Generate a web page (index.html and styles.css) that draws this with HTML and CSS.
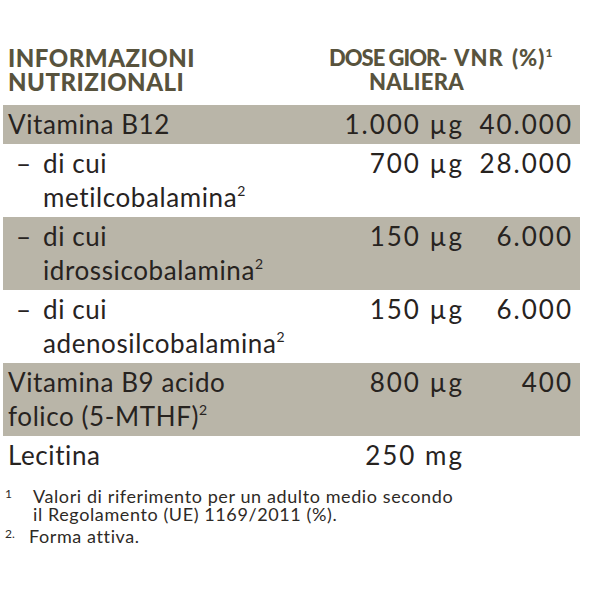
FILE: index.html
```html
<!DOCTYPE html>
<html lang="it">
<head>
<meta charset="utf-8">
<title>Informazioni nutrizionali</title>
<link rel="stylesheet" href="styles.css">
</head>
<body>
<div class="panel">
  <div class="head">
    <div class="h-name">INFORMAZIONI<br>NUTRIZIONALI</div>
    <div class="h-dose"><span class="l1">DOSE GIOR-</span><span class="l2">NALIERA</span></div>
    <div class="h-vnr">VNR (%)<sup>1</sup></div>
  </div>
  <div class="table">
    <div class="row shade">
      <div class="name">Vitamina B12</div>
      <div class="val">1.000 µg</div>
      <div class="vnr">40.000</div>
    </div>
    <div class="row">
      <div class="name sub"><span class="dash">–</span><span>di cui<br>metilcobalamina<sup>2</sup></span></div>
      <div class="val">700 µg</div>
      <div class="vnr">28.000</div>
    </div>
    <div class="row shade">
      <div class="name sub"><span class="dash">–</span><span>di cui<br>idrossicobalamina<sup>2</sup></span></div>
      <div class="val">150 µg</div>
      <div class="vnr">6.000</div>
    </div>
    <div class="row">
      <div class="name sub"><span class="dash">–</span><span>di cui<br>adenosilcobalamina<sup>2</sup></span></div>
      <div class="val">150 µg</div>
      <div class="vnr">6.000</div>
    </div>
    <div class="row shade">
      <div class="name">Vitamina B9 acido<br>folico (5-MTHF)<sup>2</sup></div>
      <div class="val">800 µg</div>
      <div class="vnr">400</div>
    </div>
    <div class="row">
      <div class="name">Lecitina</div>
      <div class="val">250 mg</div>
      <div class="vnr"></div>
    </div>
  </div>
  <div class="notes">
    <div class="note"><span class="mark">1</span><span>Valori di riferimento per un adulto medio secondo<br>il Regolamento (UE) 1169/2011 (%).</span></div>
    <div class="note note2"><span class="mark">2.</span><span>Forma attiva.</span></div>
  </div>
</div>
</body>
</html>
```

FILE: styles.css
```css
* { box-sizing: border-box; }
html, body { margin: 0; padding: 0; background: #ffffff; }
body { font-family: "Lato", "DejaVu Sans", sans-serif; color: #27231f; }

.panel {
  width: 580px;
  padding: 46px 0 0 3px;
}

.head {
  display: flex;
  font-weight: 900;
  font-size: 24px;
  line-height: 24px;
  color: #58533d;
  white-space: nowrap;
}
.h-name { padding-left: 5px; width: 326px; flex: none; letter-spacing: 0.5px; }
.h-dose { display: flex; flex-direction: column; width: 125px; flex: none; font-size: 22px; }
.h-dose .l1 { letter-spacing: -1px; }
.h-dose .l2 { padding-left: 40px; letter-spacing: 0.3px; }
.h-vnr { font-size: 22px; letter-spacing: 1px; word-spacing: 2px; }
.h-vnr sup { font-size: 12px; vertical-align: top; line-height: 14px; letter-spacing: 0; }

.table { margin-top: 11px; }
.row {
  display: grid;
  grid-template-columns: 1fr 132px 118px;
  font-size: 26px;
  line-height: 34px;
  padding: 2px 0 3px;
}
.row.shade { background: #b9b5a8; }
.name { padding-left: 5px; white-space: nowrap; letter-spacing: 0.6px; }
.name.sub { display: flex; padding-left: 13px; }
.dash { width: 27px; flex: none; }
.val { text-align: right; white-space: nowrap; letter-spacing: 2px; margin-right: -2px; }
.vnr { text-align: right; padding-right: 7px; white-space: nowrap; letter-spacing: 2px; }
.row sup { font-size: 14px; line-height: 0; vertical-align: 11px; letter-spacing: 0; }

.notes {
  margin-top: 12px;
  font-size: 18px;
  line-height: 18px;
  letter-spacing: 0.6px;
  color: #2e2a26;
}
.note { display: flex; }
.note .mark { width: 30px; flex: none; padding-left: 2px; font-size: 12px; line-height: 14px; letter-spacing: 0; }
.note2 { margin-top: 4px; }
.note2 .mark { width: 26px; }
```
